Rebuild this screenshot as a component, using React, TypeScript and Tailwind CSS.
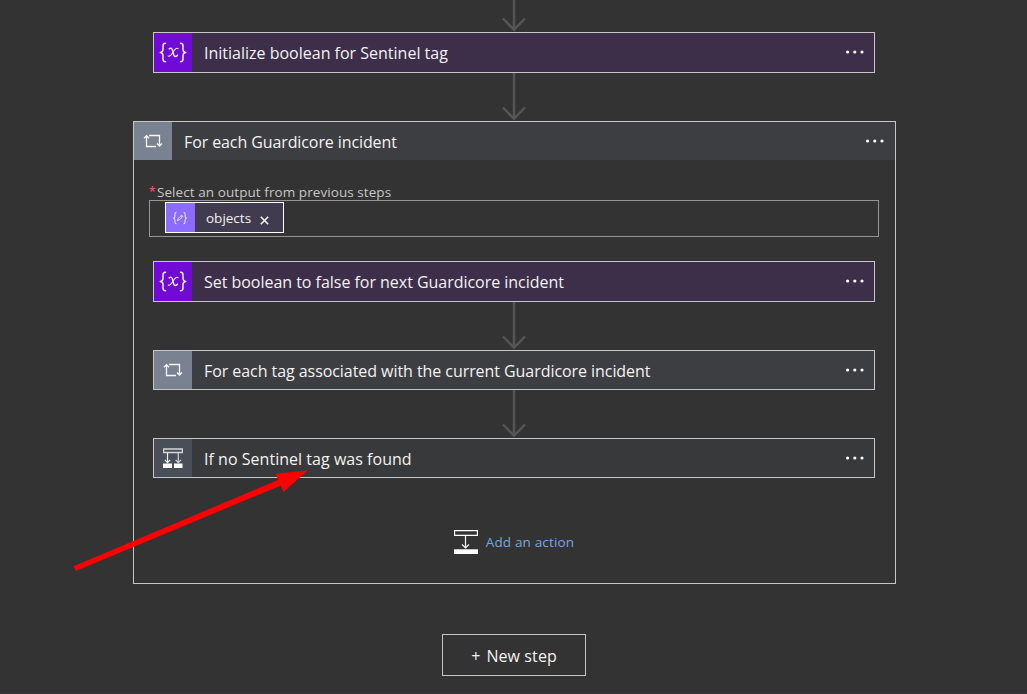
import type { ReactNode } from "react";

function VariableIcon() {
  return (
    <svg width="28" height="22" viewBox="0 0 28 22" fill="none" stroke="#f4ecfb" strokeLinecap="round" strokeLinejoin="round">
      <path d="M6.5 1.3C4.3 1.3 4 2.3 4 4V7.3C4 9 3.3 10.2 1.3 10.4C3.3 10.6 4 11.8 4 13.5V17C4 18.8 4.3 19.7 6.5 19.7" strokeWidth="1.5" />
      <path d="M21.5 1.3C23.7 1.3 24 2.3 24 4V7.3C24 9 24.7 10.2 26.7 10.4C24.7 10.6 24 11.8 24 13.5V17C24 18.8 23.7 19.7 21.5 19.7" strokeWidth="1.5" />
      <path d="M10.2 6.9C12.1 5.4 13 6.3 13.5 8.3L14.6 12.5C15.2 14.9 16.7 15.1 18.5 13.2" strokeWidth="1.4" />
      <path d="M19 6.6C17.4 5.4 15.8 7.3 14.2 9.8C12.5 12.6 11.1 15 9.2 14.1" strokeWidth="1.1" />
    </svg>
  );
}

function LoopIcon() {
  return (
    <svg width="20" height="14" viewBox="0 0 20 14" fill="none" stroke="#f5f5f7" strokeWidth="1.3">
      <path d="M6 1.5H16.5V11.5M14 9.5L16.5 12L19 9.5" />
      <path d="M13 12.5H3.5V2M1 4.2L3.5 1.7L6 4.2" />
    </svg>
  );
}

function ConditionIcon() {
  return (
    <svg width="20" height="20" viewBox="0 0 20 20" fill="none">
      <path d="M.7 1H19.3V4.5H.7Z" stroke="#d5d6d8" strokeWidth="1.3" />
      <path d="M4.5 5V14.5M1.8 11.8L4.5 14.7L7.2 11.8" stroke="#f0f0f0" strokeWidth="1.2" />
      <path d="M15.3 5V14.5M12.6 11.8L15.3 14.7L18 11.8" stroke="#d0d2d5" strokeWidth="1.2" />
      <path d="M0 15.6H9V20H0ZM11 15.6H19.5V20H11Z" fill="#fff" />
    </svg>
  );
}

function AddActionIcon() {
  return (
    <svg width="24" height="24" viewBox="0 0 24 24" fill="none">
      <path d="M.6.6H23.4V5.4H.6Z" stroke="#fff" strokeWidth="1.2" />
      <path d="M11.5 6V18M8 14.5L11.5 18L15 14.5" stroke="#f4f4f4" strokeWidth="1.2" />
      <path d="M0 19.3H24V24H0Z" fill="#fff" />
    </svg>
  );
}

function TokenIcon() {
  return (
    <svg width="16" height="14" viewBox="0 0 16 14" fill="none" stroke="#e6deff" strokeWidth="1.1" className="mr-px">
      <path d="M4.5 1.2C3 1.2 2.9 1.8 2.9 3V5C2.9 6.2 2.4 6.8 1.2 7C2.4 7.2 2.9 7.8 2.9 9V11C2.9 12.2 3 12.8 4.5 12.8" />
      <path d="M11.5 1.2C13 1.2 13.1 1.8 13.1 3V5C13.1 6.2 13.6 6.8 14.8 7C13.6 7.2 13.1 7.8 13.1 9V11C13.1 12.2 13 12.8 11.5 12.8" />
      <path d="M5.4 9.7L6 7.9L9.5 4.2L10.8 5.4L7.2 9.1ZM8.8 5L10 6.2" strokeWidth=".9" />
    </svg>
  );
}

function FlowArrow({ className }: { className: string }) {
  return (
    <div className={`flex w-[24px] flex-col items-center justify-end overflow-hidden ${className}`}>
      <svg width="24" height="48" viewBox="0 0 24 48" fill="none" stroke="#555555" strokeWidth="2.5" className="shrink-0">
        <path d="M12 0V45.5M1 34.5L12 45.8L23 34.5" />
      </svg>
    </div>
  );
}

function Dots() {
  return (
    <svg width="18" height="4" viewBox="0 0 18 4" fill="#fff" className="mb-px shrink-0">
      <circle cx="1.6" cy="2" r="1.6" />
      <circle cx="8.8" cy="2" r="1.6" />
      <circle cx="16" cy="2" r="1.6" />
    </svg>
  );
}

type StepProps = { icon: ReactNode; title: string; className: string; iconClass: string; titleClass: string };

function Step({ icon, title, className, iconClass, titleClass }: StepProps) {
  return (
    <div className={`flex w-[722px] shrink-0 items-center border border-[#c8c6c4] pr-[10px] ${className}`}>
      <div className={`flex w-[38px] shrink-0 items-center justify-center self-stretch ${iconClass}`}>{icon}</div>
      <span className={`ml-[12px] flex-1 whitespace-nowrap text-[16px] leading-[20px] text-[#f3f2f1] ${titleClass}`}>{title}</span>
      <Dots />
    </div>
  );
}

export default function App() {
  return (
    <main className="relative flex h-[694px] w-[1027px] flex-col items-center overflow-hidden border-b-2 border-[#383336] bg-[#333333] pl-[2px] font-['Open_Sans','Noto_Sans',sans-serif]">
      <div className="flex w-[722px] shrink-0 flex-col items-center pr-px">
        <FlowArrow className="h-[32px]" />
        <Step icon={<VariableIcon />} title="Initialize boolean for Sentinel tag" className="h-[41px] bg-[#3d2e4a]" iconClass="bg-[#700bd6]" titleClass="" />
        <FlowArrow className="h-[48px]" />
      </div>

      <section className="flex h-[463px] w-[763px] shrink-0 flex-col border border-[#c8c6c4]">
        <header className="flex h-[38px] shrink-0 items-center bg-[#3d3e42] pr-[11px]">
          <div className="flex w-[38px] items-center justify-center self-stretch bg-[#798291]"><LoopIcon /></div>
          <span className="ml-[12px] flex-1 whitespace-nowrap pt-[2px] text-[16px] leading-[20px] tracking-[-0.1px] text-[#f3f2f1]">For each Guardicore incident</span>
          <Dots />
        </header>
        <div className="flex flex-col pl-[15px] pt-[24px]">
          <div className="flex h-[16px] items-center whitespace-nowrap text-[13.5px] leading-[16px] tracking-[0.07px] text-[#c8c6c4]">
            <span className="w-[8px] text-[12px] text-[#e9696f]">*</span>
            <span>Select an output from previous steps</span>
          </div>
          <div className="flex h-[37px] w-[730px] items-start border border-[#979593] pl-[15px] pt-px">
            <div className="flex h-[31px] w-[119px] items-center border border-white bg-[#413b50]">
              <div className="flex w-[29px] items-center justify-center self-stretch bg-[#8c6cff]"><TokenIcon /></div>
              <span className="ml-[11px] w-[54px] text-[13.5px] leading-[18px] text-[#f3f2f1]">objects</span>
              <svg width="9" height="9" viewBox="0 0 9 9" stroke="#f3f2f1" strokeWidth="1.6" className="mt-[5px]"><path d="M.8.8L8.2 8.2M8.2.8L.8 8.2" /></svg>
            </div>
          </div>
        </div>
        <div className="ml-[19px] mt-[24px] flex w-[722px] flex-col items-center">
          <Step icon={<VariableIcon />} title="Set boolean to false for next Guardicore incident" className="h-[41px] bg-[#3d2e4a]" iconClass="bg-[#700bd6]" titleClass="tracking-[-0.03px]" />
          <FlowArrow className="h-[48px]" />
          <Step icon={<LoopIcon />} title="For each tag associated with the current Guardicore incident" className="h-[40px] bg-[#3d3e42]" iconClass="bg-[#798291]" titleClass="pt-[2px] tracking-[-0.06px]" />
          <FlowArrow className="h-[48px]" />
          <Step icon={<ConditionIcon />} title="If no Sentinel tag was found" className="h-[40px] bg-[#38393b]" iconClass="bg-[#484f58]" titleClass="pt-[2px] tracking-[0.03px]" />
          <button className="mt-[52px] flex h-[24px] items-center gap-[8px] whitespace-nowrap text-[13.5px] leading-[18px] tracking-[0.16px] text-[#75a7e0]">
            <AddActionIcon />
            <span>Add an action</span>
          </button>
        </div>
      </section>

      <button className="mr-px mt-[50px] flex h-[42px] w-[144px] shrink-0 items-center justify-center gap-[6px] border border-[#c8c6c4] pt-[2px] text-[16px] tracking-[0.1px] text-[#f3f2f1]">
        <span>+</span>
        <span>New step</span>
      </button>

      <svg width="236" height="104" viewBox="0 0 236 104" fill="#ff0000" className="pointer-events-none absolute left-[73px] top-[469px]">
        <path d="M.5 97.2L205 11L202.7 4.7L234.5 1.5L210.5 23L207.8 16.5L2.8 102Z" />
      </svg>
    </main>
  );
}
